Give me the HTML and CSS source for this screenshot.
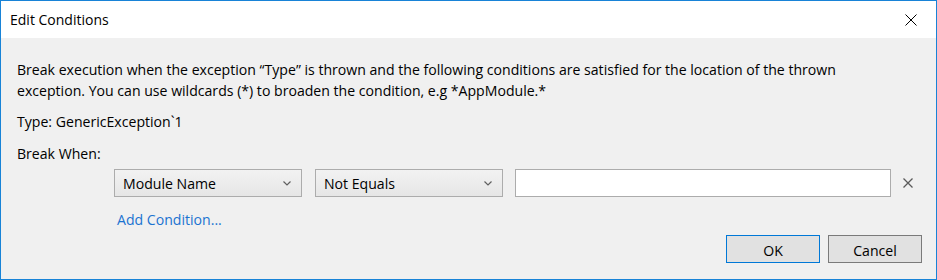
FILE: index.html
```html
<!DOCTYPE html>
<html>
<head>
<meta charset="utf-8">
<link rel="stylesheet" href="styles.css">
</head>
<body>
<div class="window">
  <div class="titlebar">
    <span class="title">Edit Conditions</span>
    <button class="close" aria-label="Close">
      <svg width="12" height="12" viewBox="0 0 12 12"><path d="M0.5 0.5L11.5 11.5M11.5 0.5L0.5 11.5" stroke="#000" stroke-width="1" fill="none"/></svg>
    </button>
  </div>
  <div class="content">
    <p class="desc">Break execution when the exception “Type” is thrown and the following conditions are satisfied for the location of the thrown exception. You can use wildcards (*) to broaden the condition, e.g *AppModule.*</p>
    <p class="type">Type: GenericException`1</p>
    <p class="when">Break When:</p>
    <div class="condition">
      <div class="select"><span>Module Name</span><svg class="chev" width="8" height="5" viewBox="0 0 8 5"><path d="M0.5 0.5L4 4L7.5 0.5" stroke="#606060" stroke-width="1.2" fill="none"/></svg></div>
      <div class="select"><span>Not Equals</span><svg class="chev" width="8" height="5" viewBox="0 0 8 5"><path d="M0.5 0.5L4 4L7.5 0.5" stroke="#606060" stroke-width="1.2" fill="none"/></svg></div>
      <div class="input"></div>
      <svg class="remove" width="10" height="10" viewBox="0 0 10 10"><path d="M0.5 0.5L9.5 9.5M9.5 0.5L0.5 9.5" stroke="#5a5a5a" stroke-width="1.3" fill="none"/></svg>
    </div>
    <a class="add" href="#">Add Condition...</a>
    <div class="buttons">
      <button class="btn primary">OK</button>
      <button class="btn">Cancel</button>
    </div>
  </div>
</div>
</body>
</html>
```

FILE: styles.css
```css
* { box-sizing: border-box; }
html, body { margin: 0; padding: 0; }
body {
  font-family: "Open Sans", "Noto Sans", sans-serif;
  font-size: 14.1px;
  color: #000;
  background: #f0f0f0;
}
.window {
  width: 937px;
  height: 280px;
  border: 1px solid #1883d7;
  background: #f0f0f0;
  display: flex;
  flex-direction: column;
}
.titlebar {
  height: 37px;
  background: #fff;
  display: flex;
  align-items: center;
  justify-content: space-between;
  padding-left: 9px;
  flex: none;
}
.title { font-size: 14px; }
.close {
  border: 0;
  background: transparent;
  width: 46px;
  height: 36px;
  padding: 0;
  display: flex;
  align-items: center;
  justify-content: center;
  margin-right: 2px;
}
.content {
  flex: 1;
  padding: 21px 14px 0 16px;
  display: flex;
  flex-direction: column;
}
p { margin: 0; }
.desc { line-height: 21px; max-width: 860px; }
.type { margin-top: 10px; line-height: 21px; }
.when { margin-top: 11px; line-height: 21px; }
.condition {
  margin-top: 5px;
  margin-left: 97px;
  display: flex;
  align-items: center;
  height: 28px;
}
.select {
  width: 188px;
  height: 28px;
  border: 1px solid #acacac;
  background: linear-gradient(#f2f2f2, #e6e6e6);
  display: flex;
  align-items: center;
  justify-content: space-between;
  padding: 1px 10px 0 8px;
  margin-right: 13px;
}
.select + .select { margin-right: 12px; }
.chev { margin-top: -1px; }
.input {
  width: 376px;
  height: 28px;
  border: 1px solid #acacac;
  background: #fff;
}
.remove { margin-left: 12px; }
.add {
  margin-top: 13px;
  margin-left: 100px;
  color: #1b73d1;
  text-decoration: none;
  align-self: flex-start;
}
.buttons {
  margin-top: 6px;
  display: flex;
  justify-content: flex-end;
  gap: 8px;
}
.btn {
  width: 94px;
  height: 28px;
  border: 1px solid #7a7a7a;
  background: #e1e1e1;
  font-family: inherit;
  font-size: 14.1px;
  color: #000;
  padding: 2px 0 0;
}
.btn.primary { border-color: #0078d7; }
```
